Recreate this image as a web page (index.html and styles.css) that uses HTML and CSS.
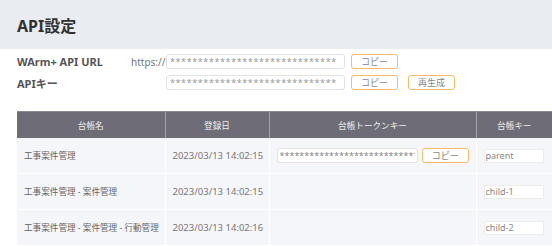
FILE: index.html
```html
<!DOCTYPE html>
<html lang="ja">
<head>
    <meta charset="UTF-8">
    <meta name="viewport" content="width=device-width, initial-scale=1.0">
    <title>API設定</title>
    <link rel="stylesheet" href="styles.css">
</head>
<body>
    <!-- タイトル -->
    <div class="page-header">
        <h1>API設定</h1>
    </div>

    <!-- API情報 -->
    <div class="api-settings">
        <div class="api-row">
            <span class="api-label">WArm+ API URL</span>
            <span class="api-prefix">https://</span>
            <input type="text" class="api-input" value="******************************" readonly>
            <button class="btn">コピー</button>
        </div>
        <div class="api-row">
            <span class="api-label">APIキー</span>
            <span class="api-prefix"></span>
            <input type="text" class="api-input" value="******************************" readonly>
            <button class="btn">コピー</button>
            <button class="btn btn-regen">再生成</button>
        </div>
    </div>

    <!-- 台帳一覧 -->
    <table class="ledger-table">
        <colgroup>
            <col class="col-name">
            <col class="col-date">
            <col class="col-token">
            <col class="col-key">
        </colgroup>
        <thead>
            <tr>
                <th>台帳名</th>
                <th>登録日</th>
                <th>台帳トークンキー</th>
                <th>台帳キー</th>
            </tr>
        </thead>
        <tbody>
            <tr>
                <td>工事案件管理</td>
                <td>2023/03/13 14:02:15</td>
                <td>
                    <div class="token-cell">
                        <input type="text" class="token-input" value="****************************************" readonly>
                        <button class="btn">コピー</button>
                    </div>
                </td>
                <td><input type="text" class="key-input" value="parent"></td>
            </tr>
            <tr>
                <td>工事案件管理 - 案件管理</td>
                <td>2023/03/13 14:02:15</td>
                <td></td>
                <td><input type="text" class="key-input" value="child-1"></td>
            </tr>
            <tr>
                <td>工事案件管理 - 案件管理 - 行動管理</td>
                <td>2023/03/13 14:02:16</td>
                <td></td>
                <td><input type="text" class="key-input" value="child-2"></td>
            </tr>
        </tbody>
    </table>
</body>
</html>
```

FILE: styles.css
```css
body {
    font-family: 'Noto Sans', 'Noto Sans CJK JP', sans-serif;
    margin: 0;
    background-color: #ffffff;
    color: #666;
    overflow: hidden;
}
.page-header {
    height: 49px;
    background-color: #e9ecf1;
    display: flex;
    align-items: center;
    padding-left: 17px;
}
.page-header h1 {
    margin: 0;
    font-size: 16px;
    font-weight: 700;
    color: #333;
}
.api-settings {
    padding: 5px 0 0 17px;
    display: flex;
    flex-direction: column;
    gap: 6px;
}
.api-row {
    display: flex;
    align-items: center;
    height: 15px;
}
.api-label {
    width: 114px;
    font-size: 11px;
    font-weight: 700;
    color: #555;
}
.api-prefix {
    width: 35px;
    font-size: 10px;
    color: #777;
}
.api-input {
    width: 179px;
    height: 15px;
    box-sizing: border-box;
    border: 1px solid #e3e3e3;
    border-radius: 3px;
    padding: 0 3px;
    font-family: inherit;
    font-size: 9px;
    color: #999;
    letter-spacing: 0.6px;
    margin-right: 6px;
    outline: none;
}
.btn {
    width: 47px;
    height: 15px;
    box-sizing: border-box;
    border: 1px solid #f9b967;
    border-radius: 3px;
    background-color: #ffffff;
    color: #888;
    font-family: inherit;
    font-size: 9px;
    padding: 0;
    line-height: 13px;
    cursor: pointer;
}
.btn-regen {
    margin-left: 10px;
}
.ledger-table {
    margin: 21px 0 0 17px;
    width: 535px;
    border-collapse: collapse;
    table-layout: fixed;
    font-size: 8.6px;
}
.col-name { width: 148px; }
.col-date { width: 104px; }
.col-token { width: 207px; }
.col-key { width: 76px; }
.ledger-table th {
    height: 26px;
    padding: 0;
    background-color: #6d6c77;
    color: #eeeeee;
    font-weight: 400;
    text-align: center;
    border-left: 1px solid #a3a3ab;
    border-top: 1px solid #8b8b94;
}
.ledger-table th:first-child {
    border-left: none;
}
.ledger-table td {
    height: 35px;
    padding: 0 7px;
    background-color: #f5f6fa;
    border-left: 1px solid #ffffff;
    border-bottom: 1px solid #ffffff;
    white-space: nowrap;
    color: #666;
}
.ledger-table td:first-child {
    border-left: none;
}
.ledger-table td:nth-child(2) {
    color: #777;
    font-size: 9.5px;
}
.token-cell {
    display: flex;
    align-items: center;
    gap: 4px;
}
.token-input {
    width: 143px;
    height: 15px;
    box-sizing: border-box;
    border: 1px solid #e8e3dc;
    border-radius: 3px;
    padding: 0 2px;
    font-family: inherit;
    font-size: 9px;
    color: #888;
    background-color: #ffffff;
    outline: none;
}
.key-input {
    width: 60px;
    height: 14px;
    box-sizing: border-box;
    border: 1px solid #ebebeb;
    padding: 0 1px;
    font-family: inherit;
    font-size: 9px;
    color: #888;
    background-color: #ffffff;
    outline: none;
}
```
